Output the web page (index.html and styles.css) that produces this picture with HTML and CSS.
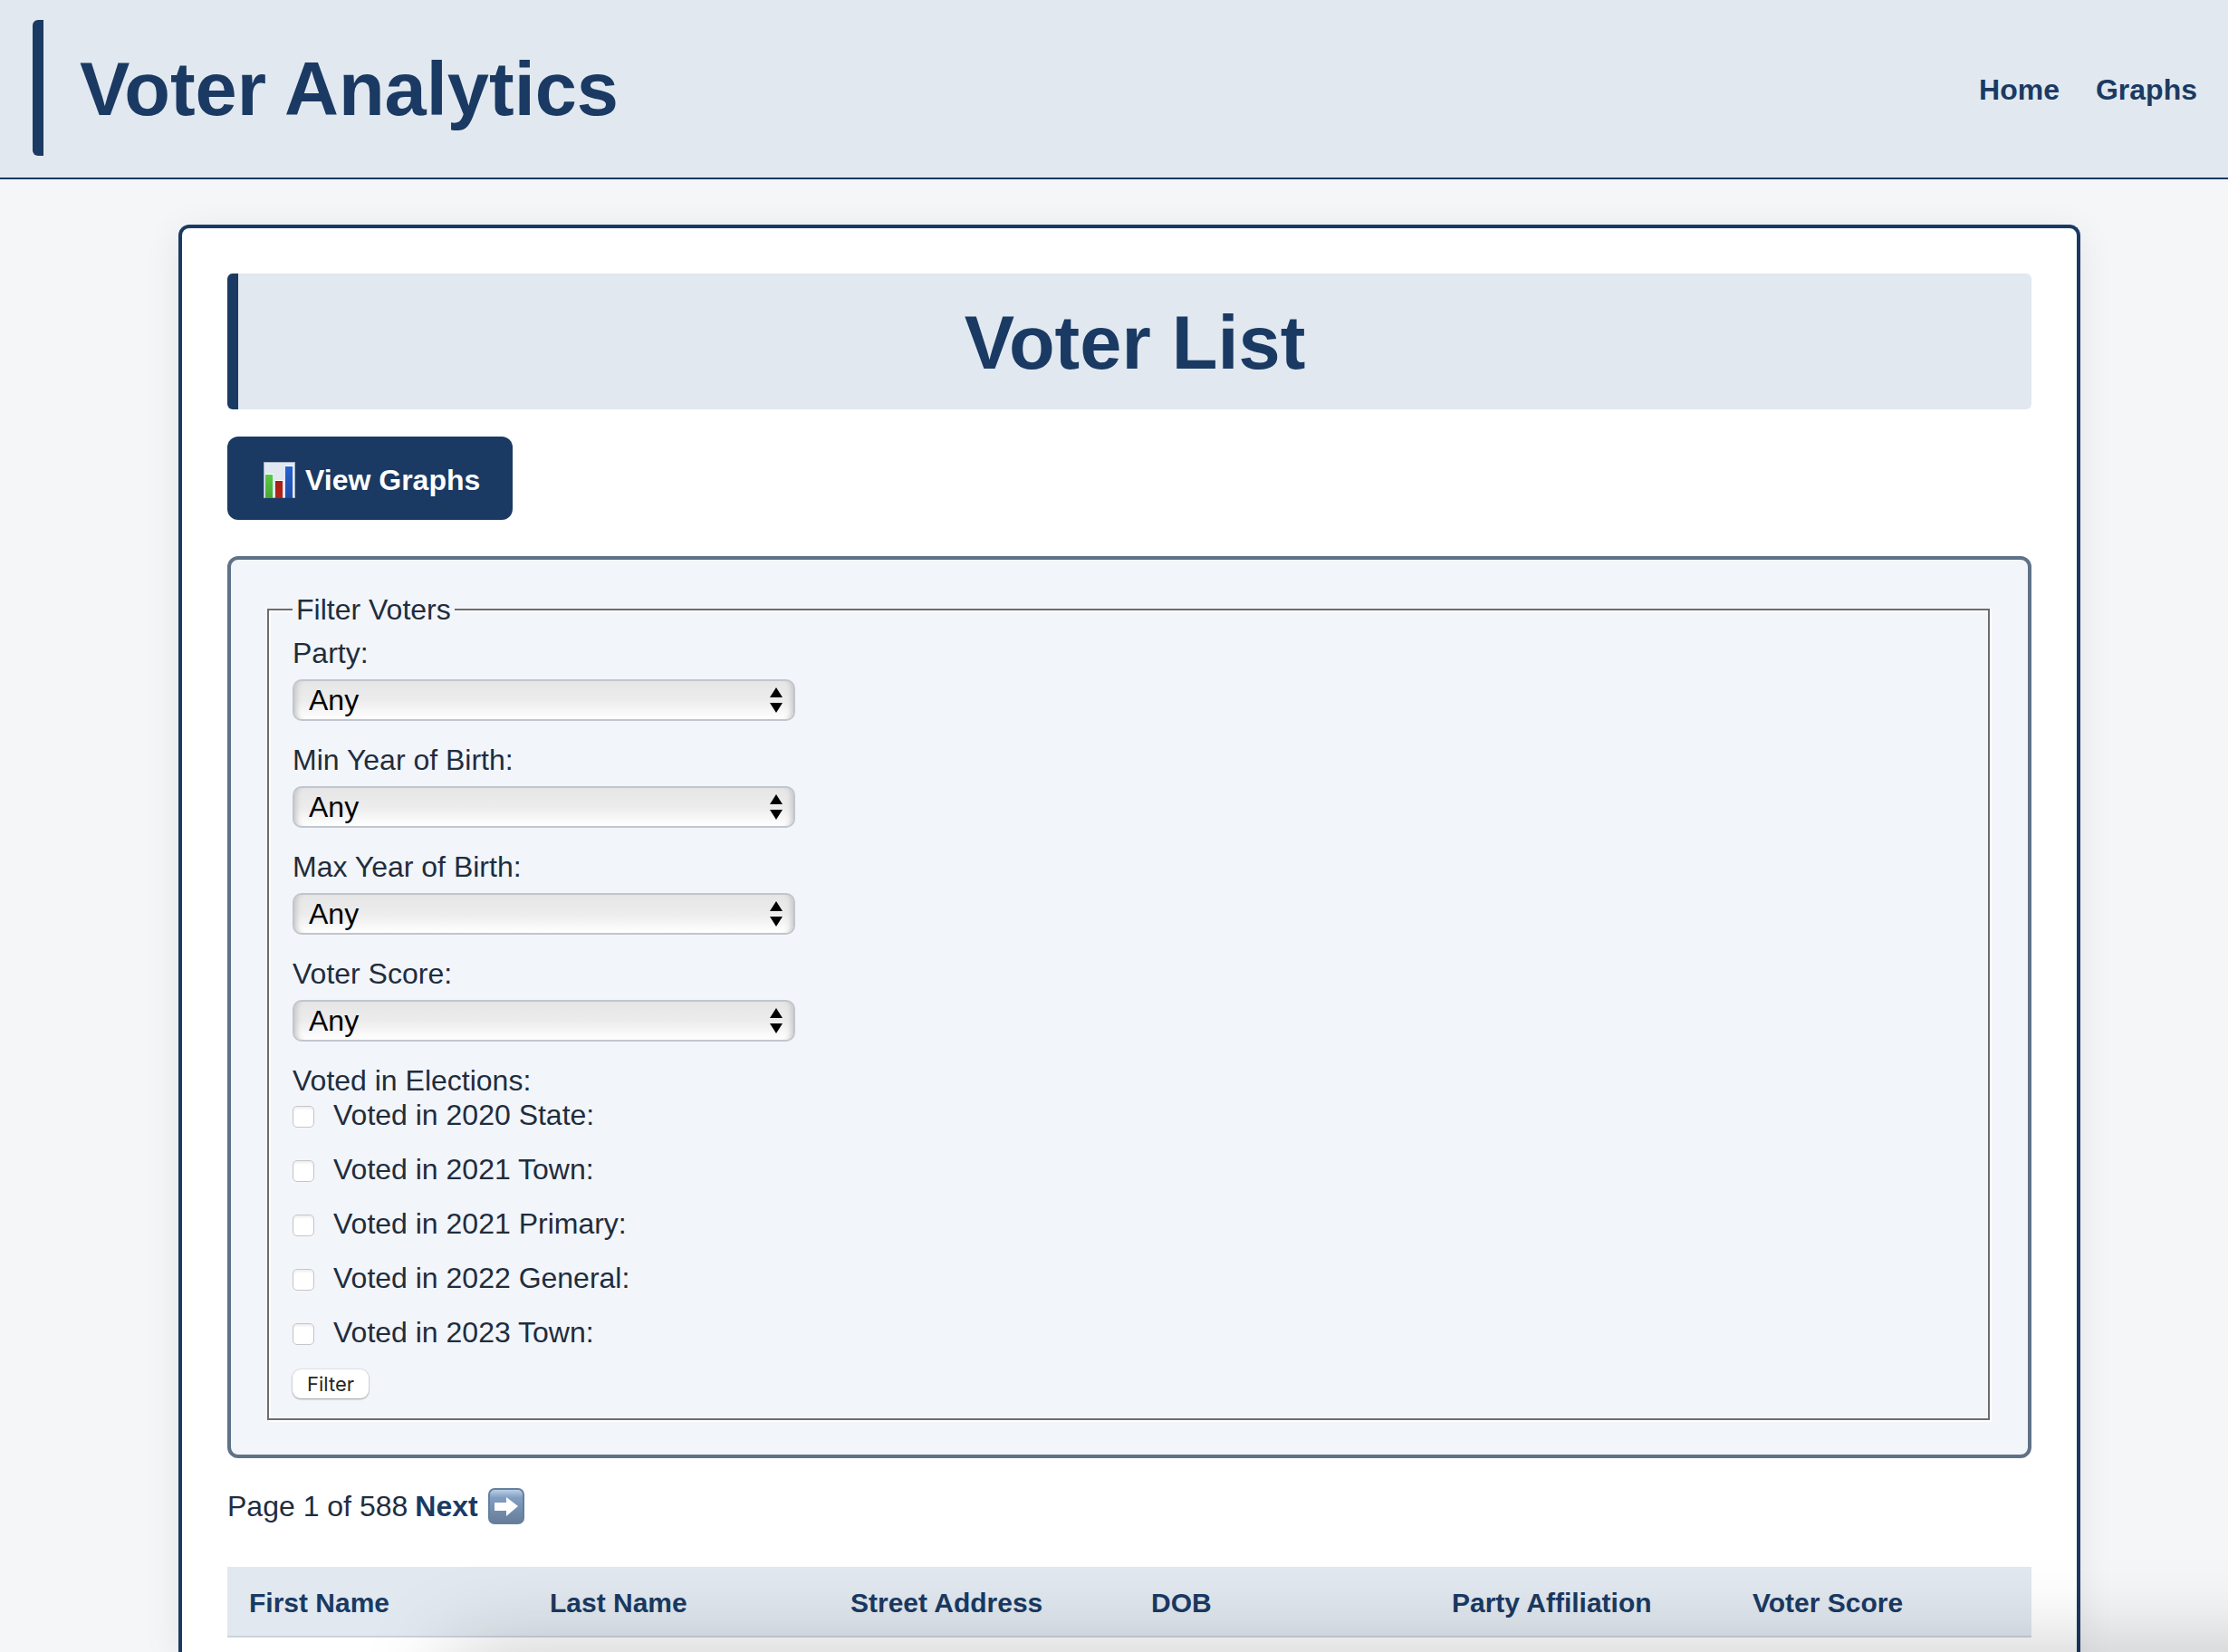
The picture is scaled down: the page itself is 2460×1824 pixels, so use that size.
FILE: index.html
```html
<!DOCTYPE html>
<html lang="en">
<head>
    <meta charset="UTF-8">
    <meta name="viewport" content="width=device-width, initial-scale=1.0">
    <title>Voter Analytics</title>
    <link rel="stylesheet" href="styles.css">
</head>
<body>
    <header class="site-header">
        <h1>Voter Analytics</h1>
        <nav>
            <a href="#">Home</a>
            <a href="#">Graphs</a>
        </nav>
    </header>

    <main class="container">
        <h1>Voter List</h1>

        <a class="graphs-btn" href="#">
            <svg class="chart-icon" viewBox="0 0 36 42" aria-hidden="true">
                <defs>
                    <linearGradient id="green" x1="0" y1="0" x2="0" y2="1"><stop offset="0" stop-color="#55cc44"/><stop offset="1" stop-color="#4aa535"/></linearGradient>
                    <linearGradient id="red" x1="0" y1="0" x2="0" y2="1"><stop offset="0" stop-color="#a81f16"/><stop offset="1" stop-color="#b52318"/></linearGradient>
                    <linearGradient id="blue" x1="0" y1="0" x2="0" y2="1"><stop offset="0" stop-color="#2563cf"/><stop offset="1" stop-color="#1f4cab"/></linearGradient>
                </defs>
                <rect x="0.5" y="1.5" width="34" height="39" fill="#e2e8f1" stroke="#a9b3c2"/>
                <rect x="2" y="14" width="9" height="1" fill="#ffffff"/>
                <rect x="2" y="15" width="8" height="26" fill="url(#green)"/>
                <rect x="13" y="21" width="9" height="1" fill="#ffffff"/>
                <rect x="13" y="22" width="8" height="19" fill="url(#red)"/>
                <rect x="24" y="5" width="9" height="1" fill="#ffffff"/>
                <rect x="24" y="6" width="8" height="35" fill="url(#blue)"/>
            </svg>
            View Graphs
        </a>

        <form class="filter-form" onsubmit="return false;">
            <fieldset>
                <legend>Filter Voters</legend>

                <label for="party">Party:</label>
                <div class="select-wrap">
                    <select id="party" name="party"><option>Any</option></select>
                    <svg class="arrows" viewBox="0 0 14 28" aria-hidden="true"><path d="M7 0L14 11H0zM0 17H14L7 28z"/></svg>
                </div>

                <label for="min_year">Min Year of Birth:</label>
                <div class="select-wrap">
                    <select id="min_year" name="min_year"><option>Any</option></select>
                    <svg class="arrows" viewBox="0 0 14 28" aria-hidden="true"><path d="M7 0L14 11H0zM0 17H14L7 28z"/></svg>
                </div>

                <label for="max_year">Max Year of Birth:</label>
                <div class="select-wrap">
                    <select id="max_year" name="max_year"><option>Any</option></select>
                    <svg class="arrows" viewBox="0 0 14 28" aria-hidden="true"><path d="M7 0L14 11H0zM0 17H14L7 28z"/></svg>
                </div>

                <label for="voter_score">Voter Score:</label>
                <div class="select-wrap">
                    <select id="voter_score" name="voter_score"><option>Any</option></select>
                    <svg class="arrows" viewBox="0 0 14 28" aria-hidden="true"><path d="M7 0L14 11H0zM0 17H14L7 28z"/></svg>
                </div>

                <p>Voted in Elections:</p>
                <div class="check-row">
                    <input type="checkbox" id="v20state" name="v20state">
                    <label for="v20state">Voted in 2020 State:</label>
                </div>
                <div class="check-row">
                    <input type="checkbox" id="v21town" name="v21town">
                    <label for="v21town">Voted in 2021 Town:</label>
                </div>
                <div class="check-row">
                    <input type="checkbox" id="v21primary" name="v21primary">
                    <label for="v21primary">Voted in 2021 Primary:</label>
                </div>
                <div class="check-row">
                    <input type="checkbox" id="v22general" name="v22general">
                    <label for="v22general">Voted in 2022 General:</label>
                </div>
                <div class="check-row">
                    <input type="checkbox" id="v23town" name="v23town">
                    <label for="v23town">Voted in 2023 Town:</label>
                </div>

                <button type="submit" class="filter-btn">Filter</button>
            </fieldset>
        </form>

        <div class="pagination">
            <span>Page 1 of 588</span>
            <a href="#">Next
                <svg class="next-icon" viewBox="0 0 40 40" aria-hidden="true">
                    <defs>
                        <linearGradient id="tile" x1="0" y1="0" x2="0" y2="1"><stop offset="0" stop-color="#c3d3e6"/><stop offset="0.25" stop-color="#829fc3"/><stop offset="1" stop-color="#667b98"/></linearGradient>
                    </defs>
                    <rect x="1" y="1" width="38" height="38" rx="6" fill="url(#tile)" stroke="#63809f" stroke-width="2"/>
                    <path d="M7 16H20V10L33 20L20 31V25H7z" fill="#ffffff"/>
                </svg>
            </a>
        </div>

        <table>
            <thead>
                <tr>
                    <th>First Name</th>
                    <th>Last Name</th>
                    <th>Street Address</th>
                    <th>DOB</th>
                    <th>Party Affiliation</th>
                    <th>Voter Score</th>
                </tr>
            </thead>
        </table>
    </main>
    <div class="bottom-shade"></div>
</body>
</html>
```

FILE: styles.css
```css
* {
    box-sizing: border-box;
}
body {
    display: flex;
    flex-direction: column;
    min-height: 100vh;
    margin: 0;
    background-color: #f4f6f8;
    color: #1f2d3d;
    font-family: "Helvetica Neue", "Liberation Sans", Arial, sans-serif;
    font-size: 32px;
    line-height: 38px;
}
a {
    color: #1a3a63;
    font-weight: bold;
    text-decoration: none;
}
h1 {
    margin: 0;
    padding: 27px 28px 23px 40px;
    border-left: 12px solid #1a3a63;
    border-radius: 6px;
    background-color: #e1e8ef;
    color: #1a3a63;
    font-size: 83px;
    line-height: 100px;
}
.site-header {
    display: flex;
    align-items: center;
    justify-content: space-between;
    padding: 22px 34px 24px 36px;
    background-color: #e1e8ef;
    border-bottom: 2px solid #1a3a63;
}
.site-header nav {
    display: flex;
    gap: 40px;
    padding-top: 4px;
}
.container {
    flex: 1;
    margin: 50px 163px 0 197px;
    padding: 50px 50px 0;
    background-color: #fff;
    border: 4px solid #1a3a63;
    border-bottom: none;
    border-radius: 12px 12px 0 0;
    box-shadow: 0 8px 40px rgba(0, 0, 0, 0.08);
}
.container h1 {
    padding-left: 28px;
    text-align: center;
}
.graphs-btn {
    display: flex;
    align-items: center;
    gap: 10px;
    width: fit-content;
    margin-top: 30px;
    padding: 27px 36px 23px 40px;
    background-color: #1a3a63;
    color: #fff;
    border-radius: 12px;
}
.chart-icon {
    width: 36px;
    height: 42px;
}
.filter-form {
    margin-top: 40px;
    padding: 36px;
    background-color: #f2f5fa;
    border: 4px solid #5f7288;
    border-radius: 12px;
}
.filter-form fieldset {
    margin: 0 6px 2px 4px;
    padding: 10px 26px 22px;
    border: 2px solid #6d6d6d;
    box-shadow: 2px 2px 0 #fff, inset 2px 2px 0 #fff;
}
.filter-form legend {
    padding: 0 4px;
    background-color: #f2f5fa;
}
.filter-form label,
.filter-form p {
    display: block;
    margin: 0;
}
.select-wrap {
    position: relative;
    width: 555px;
    margin: 10px 0 24px;
}
.select-wrap select {
    display: block;
    width: 100%;
    height: 46px;
    padding: 0 40px 0 16px;
    appearance: none;
    background: linear-gradient(#e6e6e6, #ececec 50%, #fff);
    border: 2px solid #c0c6cf;
    border-radius: 10px;
    box-shadow: inset 8px 0 6px -6px #c2c2c2, inset -8px 0 6px -6px #c2c2c2;
    color: #000;
    font-family: inherit;
    font-size: 32px;
}
.arrows {
    position: absolute;
    top: 9px;
    right: 14px;
    width: 14px;
    height: 28px;
    pointer-events: none;
}
.check-row {
    display: flex;
    align-items: center;
    gap: 21px;
    margin-bottom: 22px;
}
.check-row input {
    width: 24px;
    height: 24px;
    margin: 4px 0 0;
    appearance: none;
    background-color: #fff;
    border: 1px solid #c6c6c8;
    border-radius: 5px;
    box-shadow: inset 0 2px 3px #ededed;
}
.filter-btn {
    display: block;
    height: 32px;
    padding: 0 16px;
    background-color: #fff;
    border: none;
    border-radius: 9px;
    box-shadow: 0 0 1px 1px rgba(0, 0, 0, 0.08), 0 1px 2px rgba(0, 0, 0, 0.3);
    color: #262626;
    font-family: Inter, sans-serif;
    font-size: 22px;
    line-height: 32px;
}
.pagination {
    display: flex;
    align-items: center;
    gap: 8px;
    height: 40px;
    margin: 33px 0 47px;
}
.pagination a {
    display: flex;
    align-items: center;
    gap: 11px;
}
.next-icon {
    width: 40px;
    height: 40px;
}
table {
    width: 100%;
    border-collapse: collapse;
    table-layout: fixed;
}
th {
    padding: 21px 24px 17px;
    background-color: #e1e8ef;
    border-bottom: 2px solid #cbd3df;
    color: #1a3a63;
    font-size: 30px;
    text-align: left;
}
/* soft shade along the bottom edge of the window */
.bottom-shade {
    position: fixed;
    right: -200px;
    bottom: -200px;
    left: 500px;
    height: 200px;
    box-shadow: 0 0 100px rgba(0, 0, 0, 0.22);
    pointer-events: none;
}
```
